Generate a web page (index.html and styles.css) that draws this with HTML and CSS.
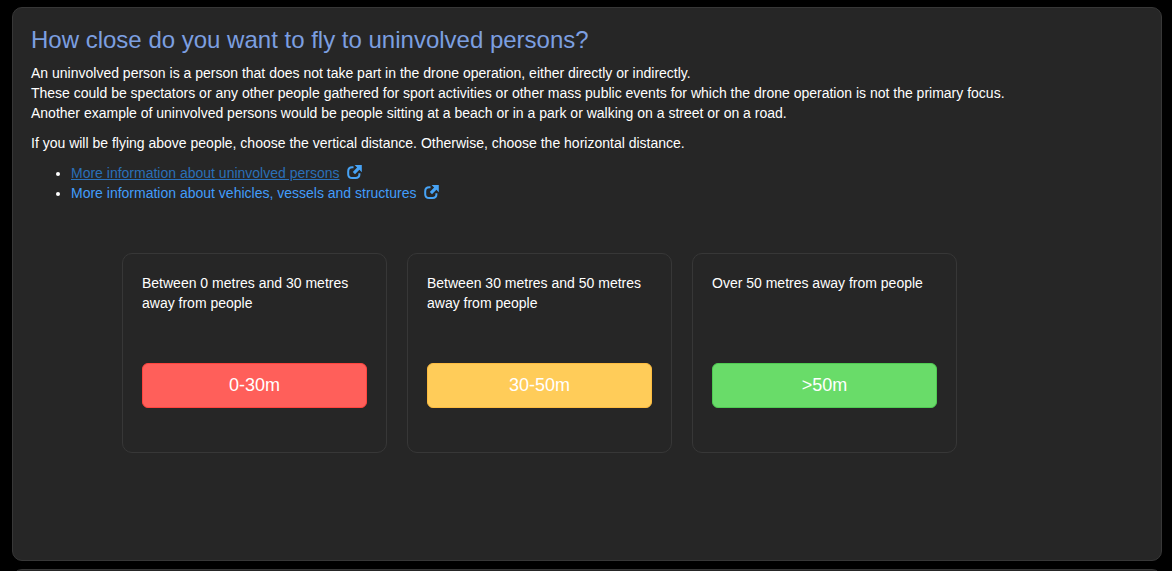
FILE: index.html
```html
<!DOCTYPE html>
<html lang="en">
<head>
    <meta charset="UTF-8">
    <meta name="viewport" content="width=device-width, initial-scale=1.0">
    <title>Distance to uninvolved persons</title>
    <link rel="stylesheet" href="styles.css">
</head>
<body>
    <main class="steps">
        <section class="panel">
            <h1>How close do you want to fly to uninvolved persons?</h1>
            <p>
                An uninvolved person is a person that does not take part in the drone operation, either directly or indirectly.<br>
                These could be spectators or any other people gathered for sport activities or other mass public events for which the drone operation is not the primary focus.<br>
                Another example of uninvolved persons would be people sitting at a beach or in a park or walking on a street or on a road.
            </p>
            <p>If you will be flying above people, choose the vertical distance. Otherwise, choose the horizontal distance.</p>
            <ul class="links">
                <li>
                    <a class="active" href="#persons">More information about uninvolved persons</a>
                    <svg class="icon" viewBox="0 0 15 15" aria-hidden="true">
                        <path class="box" d="M6.5 2.2H5.2Q1.2 2.2 1.2 6.2V9.2Q1.2 13 5.2 13H8.6Q12.4 13 12.4 9.6V8.2"/>
                        <path class="arrow" d="M7.6 0H14.8V7.2L12.4 4.8L8 9.2L5.8 7L10.1 2.6Z"/>
                    </svg>
                </li>
                <li>
                    <a href="#structures">More information about vehicles, vessels and structures</a>
                    <svg class="icon" viewBox="0 0 15 15" aria-hidden="true">
                        <path class="box" d="M6.5 2.2H5.2Q1.2 2.2 1.2 6.2V9.2Q1.2 13 5.2 13H8.6Q12.4 13 12.4 9.6V8.2"/>
                        <path class="arrow" d="M7.6 0H14.8V7.2L12.4 4.8L8 9.2L5.8 7L10.1 2.6Z"/>
                    </svg>
                </li>
            </ul>
            <div class="cards">
                <div class="card">
                    <p>Between 0 metres and 30 metres away from people</p>
                    <button type="button" class="btn btn-red">0-30m</button>
                </div>
                <div class="card">
                    <p>Between 30 metres and 50 metres away from people</p>
                    <button type="button" class="btn btn-yellow">30-50m</button>
                </div>
                <div class="card">
                    <p>Over 50 metres away from people</p>
                    <button type="button" class="btn btn-green">&gt;50m</button>
                </div>
            </div>
        </section>
        <section class="panel"></section>
    </main>
</body>
</html>
```
FILE: styles.css
```css
* {
    box-sizing: border-box;
}
body {
    margin: 0;
    height: 100vh;
    overflow: hidden;
    background-color: #000;
    color: #fff;
    font-family: "Liberation Sans", Arial, sans-serif;
    font-size: 14px;
    line-height: 20px;
}
.steps {
    display: flex;
    flex-direction: column;
    gap: 8px;
    padding: 7px 10px 7px 12px;
}
.panel {
    padding: 18px 18px 107px;
    background-color: #262626;
    border: 1px solid #373737;
    border-radius: 10px;
}
h1 {
    margin: 0 0 10px;
    color: #7c9fe0;
    font-size: 24px;
    font-weight: 400;
    line-height: 27px;
}
p {
    margin: 0 0 10px;
}
.links {
    margin: 0 0 50px;
    padding-left: 40px;
}
a {
    color: #429dfb;
    text-decoration: none;
}
a.active {
    color: #2b70b8;
    text-decoration: underline;
}
.icon {
    width: 15px;
    height: 15px;
    margin-left: 4px;
    vertical-align: -2px;
}
.box {
    fill: none;
    stroke: #47a3f5;
    stroke-width: 2;
}
.arrow {
    fill: #47a3f5;
}
.cards {
    display: flex;
    flex-wrap: wrap;
    gap: 20px;
    padding-left: 91px;
}
.card {
    width: 265px;
    min-height: 200px;
    padding: 19px;
    border: 1px solid #373737;
    border-radius: 10px;
}
.card p {
    min-height: 80px;
}
.btn {
    display: block;
    width: 100%;
    padding: 10px 16px;
    border: 1px solid;
    border-radius: 6px;
    color: #fff;
    font-family: inherit;
    font-size: 18px;
    line-height: 23px;
    cursor: pointer;
}
.btn-red {
    background-color: #ff5f5a;
    border-color: #ff443e;
}
.btn-yellow {
    background-color: #ffcc59;
    border-color: #fdbc40;
}
.btn-green {
    background-color: #69dc69;
    border-color: #4fcb52;
}
```
